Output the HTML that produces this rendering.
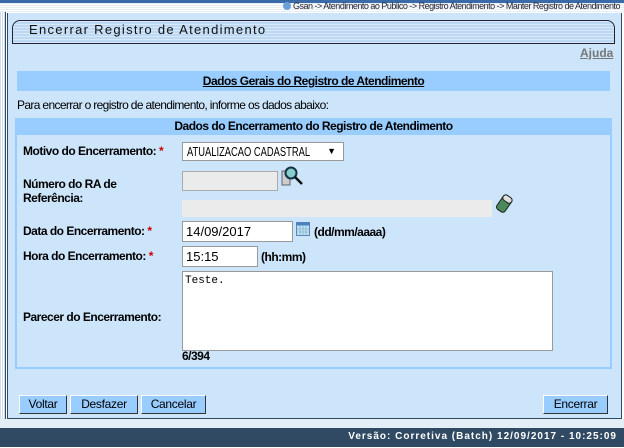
<!DOCTYPE html>
<html><head><meta charset="utf-8"><style>
*{margin:0;padding:0;box-sizing:border-box}
body{width:624px;height:448px;position:relative;overflow:hidden;background:#fff;font-family:"Liberation Sans",Arial,sans-serif;font-size:12px;color:#000}
.a{position:absolute;white-space:nowrap}
.n{letter-spacing:-0.5px}
.b{font-weight:bold}
.inp{position:absolute;background:#fff;border:1px solid #999;font-size:12px;padding:2px 3px;white-space:nowrap;overflow:hidden}
.btn{position:absolute;top:395px;height:19px;background:#99ccff;border:1px solid #fff;border-right-color:#333;border-bottom-color:#333;font-size:12px;text-align:center;line-height:16px;letter-spacing:-0.3px}
.red{color:#c00}
</style></head><body>
<div class="a" style="left:0;top:0;width:624px;height:3px;background:#3a6aa8"></div>
<div class="a" style="left:0;top:3px;width:624px;height:9px;background:repeating-linear-gradient(#e8eef6 0 1px,#fff 1px 2px)"></div>
<div class="a n" style="right:4px;top:1px;font-size:9px;color:#223">
<span style="display:inline-block;width:8px;height:8px;border-radius:50%;background:#6a9fd8;vertical-align:-1px"></span> Gsan -&gt; Atendimento ao Publico -&gt; Registro Atendimento -&gt; Manter Registro de Atendimento</div>
<div class="a" style="left:0;top:12px;width:6px;height:416px;background:repeating-linear-gradient(90deg,#cfdbe8 0 1px,#fff 1px 2px);border-right:1px solid #2a4a70"></div>
<div class="a" style="left:7px;top:13px;width:615px;height:406px;background:#cce5fb;border:1px solid #2f4a62;border-top:none"></div>
<div class="a" style="left:12px;top:20px;width:603px;height:24px;border:1px solid #223;border-radius:8px 8px 0 0;background:repeating-linear-gradient(#d7e8f8 0 1px,#bcd8f2 1px 3px)"></div>
<div class="a" style="left:29px;top:22px;font-size:13px;letter-spacing:1.3px;color:#111">Encerrar Registro de Atendimento</div>
<div class="a b" style="left:580px;top:46px;color:#777;text-decoration:underline">Ajuda</div>
<div class="a" style="left:17px;top:71px;width:593px;height:20px;background:#99ccff"></div>
<div class="a b n" style="left:17px;top:74px;width:593px;text-align:center;text-decoration:underline">Dados Gerais do Registro de Atendimento</div>
<div class="a n" style="left:17px;top:98px;letter-spacing:-0.65px">Para encerrar o registro de atendimento, informe os dados abaixo:</div>
<div class="a" style="left:15px;top:118px;width:597px;height:251px;border:2px solid #99ccff;border-top:none"></div>
<div class="a b n" style="left:15px;top:118px;width:597px;height:17px;background:#99ccff;text-align:center;line-height:16px">Dados do Encerramento do Registro de Atendimento</div>
<div class="a b n" style="left:23px;top:144px">Motivo do Encerramento: <span class="red">*</span></div>
<div class="inp" style="left:182px;top:142px;width:162px;height:19px;padding:1px 4px;line-height:15px;font-size:13px"><span style="display:inline-block;transform:scaleX(0.72);transform-origin:left">ATUALIZACAO CADASTRAL</span><span style="position:absolute;right:7px;top:1px;font-size:9px">▼</span></div>
<div class="a b n" style="left:23px;top:177px;line-height:14px">Número do RA de<br>Referência:</div>
<div class="a" style="left:182px;top:171px;width:96px;height:20px;background:#ebebeb;border:1px solid #aaa"></div>
<svg class="a" style="left:280px;top:165px" width="24" height="24"><rect x="2" y="6" width="8" height="14" fill="#ccc" stroke="#666"/><circle cx="11" cy="8" r="5.5" fill="#8cc" stroke="#134" stroke-width="2"/><line x1="15" y1="12" x2="22" y2="19" stroke="#111" stroke-width="2.5"/></svg>
<div class="a" style="left:182px;top:200px;width:310px;height:17px;background:#ebebeb"></div>
<svg class="a" style="left:494px;top:192px" width="20" height="24"><g transform="rotate(35 10 12)"><rect x="5" y="3" width="10" height="17" rx="3" fill="#4a8a5a" stroke="#222"/><rect x="5" y="3" width="10" height="6" rx="3" fill="#ddd" stroke="#222"/></g></svg>
<div class="a b n" style="left:23px;top:224px">Data do Encerramento: <span class="red">*</span></div>
<div class="inp" style="left:182px;top:221px;width:111px;height:21px;font-size:13px">14/09/2017</div>
<svg class="a" style="left:296px;top:222px" width="14" height="14"><rect x="0.5" y="0.5" width="13" height="13" fill="#bfe0f5" stroke="#5a8ab5"/><rect x="0.5" y="0.5" width="13" height="3" fill="#4a7fc0"/><path d="M1 7h12M1 10h12M4 4v9M7 4v9M10 4v9" stroke="#7ab" stroke-width="0.6"/></svg>
<div class="a b n" style="left:314px;top:225px">(dd/mm/aaaa)</div>
<div class="a b n" style="left:23px;top:249px">Hora do Encerramento: <span class="red">*</span></div>
<div class="inp" style="left:182px;top:246px;width:76px;height:21px;font-size:13px">15:15</div>
<div class="a b n" style="left:261px;top:250px">(hh:mm)</div>
<div class="a b n" style="left:23px;top:310px">Parecer do Encerramento:</div>
<div class="inp" style="left:182px;top:271px;width:371px;height:80px;font-family:'Liberation Mono',monospace;font-size:11px;padding:3px 2px">Teste.</div>
<div class="a b n" style="left:182px;top:349px">6/394</div>
<div class="btn" style="left:19px;width:48px">Voltar</div>
<div class="btn" style="left:70px;width:68px">Desfazer</div>
<div class="btn" style="left:141px;width:65px">Cancelar</div>
<div class="btn" style="left:543px;width:65px">Encerrar</div>
<div class="a" style="left:0;top:419px;width:624px;height:9px;background:#e4eef7"></div>
<div class="a" style="left:0;top:428px;width:624px;height:19px;background:#2f4a62"></div>
<div class="a b" style="right:7px;top:431px;color:#fff;font-size:10px;letter-spacing:1px">Versão: Corretiva (Batch) 12/09/2017 - 10:25:09</div>
</body></html>
